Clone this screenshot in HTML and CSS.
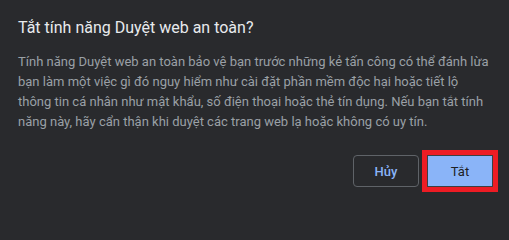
FILE: index.html
```html
<!DOCTYPE html>
<html lang="vi">
<head>
<meta charset="utf-8">
<link rel="stylesheet" href="styles.css">
</head>
<body>
<div class="dialog">
  <h1 class="title">Tắt tính năng Duyệt web an toàn?</h1>
  <p class="body">Tính năng Duyệt web an toàn bảo vệ bạn trước những kẻ tấn công có thể đánh lừa bạn làm một việc gì đó nguy hiểm như cài đặt phần mềm độc hại hoặc tiết lộ thông tin cá nhân như mật khẩu, số điện thoại hoặc thẻ tín dụng. Nếu bạn tắt tính năng này, hãy cẩn thận khi duyệt các trang web lạ hoặc không có uy tín.</p>
  <div class="actions">
    <button class="btn btn-cancel">Hủy</button>
    <button class="btn btn-confirm">Tắt</button>
  </div>
</div>
</body>
</html>
```
FILE: styles.css
```css
html, body {
  margin: 0;
  padding: 0;
  background: #292a2d;
}
.dialog {
  width: 509px;
  height: 200px;
  box-sizing: border-box;
  padding: 18px 16px 0 18px;
  font-family: Roboto, "Noto Sans", sans-serif;
}
.title {
  margin: 0;
  font-size: 16px;
  font-weight: 400;
  line-height: 20px;
  color: #e8eaed;
}
.body {
  margin: 14px 0 0 0;
  font-size: 13px;
  line-height: 20px;
  color: #9aa0a6;
}
.actions {
  display: flex;
  justify-content: flex-end;
  gap: 8px;
  margin-top: 23px;
}
.btn {
  box-sizing: border-box;
  width: 66px;
  height: 32px;
  border-radius: 4px;
  font-family: Roboto, "Noto Sans", sans-serif;
  font-size: 13px;
  font-weight: 500;
  padding: 0;
}
.btn-cancel {
  background: transparent;
  border: 1px solid #5f6368;
  color: #8ab4f8;
}
.btn-confirm {
  background: #8ab4f8;
  border: 1px solid #3c4043;
  color: #202124;
  font-weight: 400;
  border-radius: 0;
  outline: 5px solid #ed1c24;
  outline-offset: 0;
}
```
